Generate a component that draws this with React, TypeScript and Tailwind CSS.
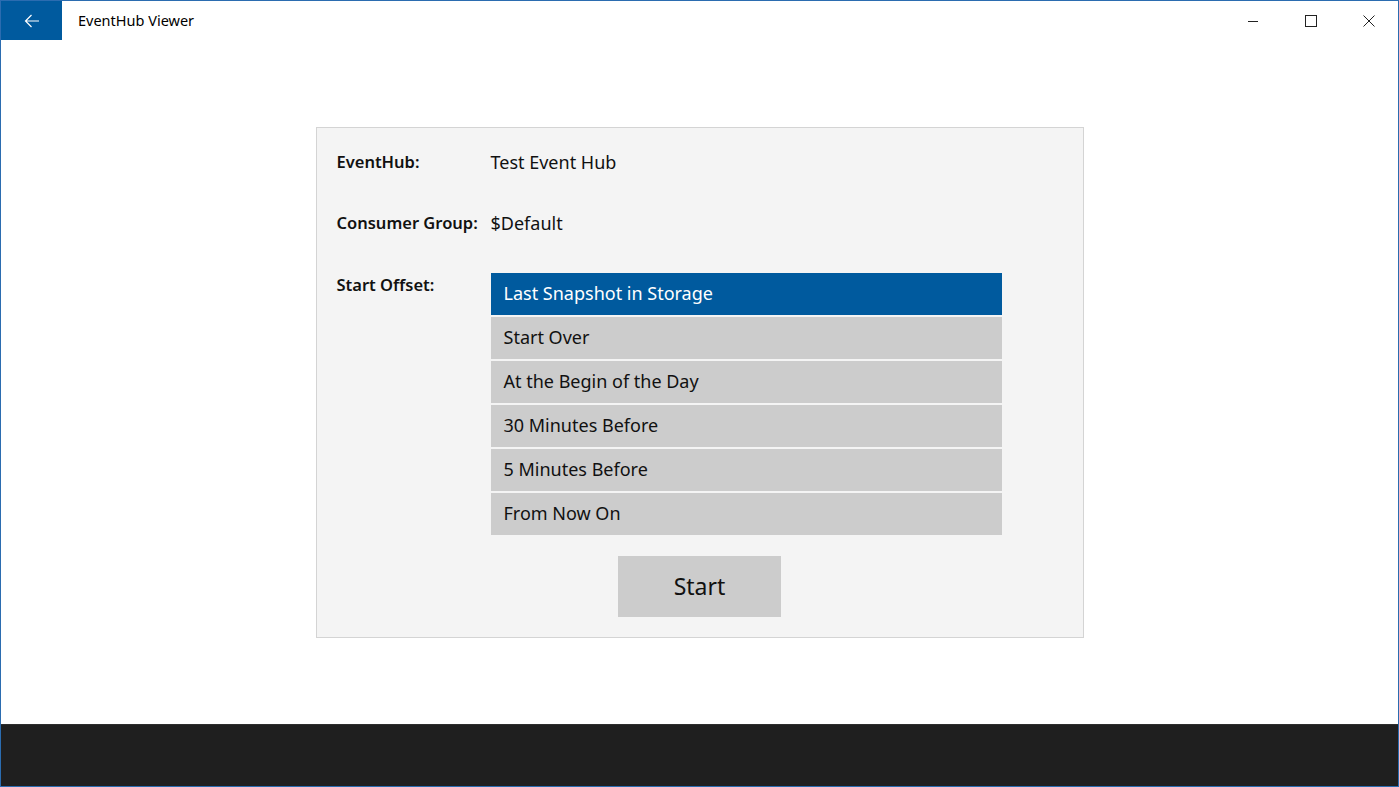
const options = [
  "Last Snapshot in Storage",
  "Start Over",
  "At the Begin of the Day",
  "30 Minutes Before",
  "5 Minutes Before",
  "From Now On",
];

export default function App() {
  const font = { fontFamily: '"Segoe UI", "Noto Sans", "Open Sans", sans-serif' };
  return (
    <div
      className="w-[1399px] h-[787px] flex flex-col bg-white border border-[#2b6cb0] text-[#111]"
      style={font}
    >
      {/* title bar */}
      <div className="h-[39px] flex items-center shrink-0">
        <div className="w-[61px] h-full bg-[#005a9e] flex items-center justify-center">
          <svg width="16" height="14" viewBox="0 0 16 14" fill="none" stroke="white" strokeWidth="1.2">
            <path d="M15 7H1.5M7.5 1L1.5 7l6 6" />
          </svg>
        </div>
        <div className="ml-[16px] text-[14.5px] text-black">EventHub Viewer</div>
        <div className="ml-auto flex h-full">
          <div className="w-[58px] h-full flex items-center justify-center">
            <svg width="12" height="12" viewBox="0 0 12 12" stroke="#222" strokeWidth="1">
              <path d="M1 6.5h10" />
            </svg>
          </div>
          <div className="w-[58px] h-full flex items-center justify-center">
            <svg width="12" height="12" viewBox="0 0 12 12" fill="none" stroke="#222" strokeWidth="1">
              <rect x="0.5" y="0.5" width="11" height="11" />
            </svg>
          </div>
          <div className="w-[58px] h-full flex items-center justify-center">
            <svg width="12" height="12" viewBox="0 0 12 12" stroke="#222" strokeWidth="1">
              <path d="M0.5 0.5l11 11M11.5 0.5l-11 11" />
            </svg>
          </div>
        </div>
      </div>

      {/* content */}
      <div className="flex-1 flex items-center justify-center">
        <div className="w-[768px] bg-[#f4f4f4] border border-[#d4d4d4] pl-[20px] pt-[22px] pb-[20px] text-[18px]">
          <div className="flex leading-[24px]">
            <div className="w-[154px] font-semibold text-[16.5px] whitespace-nowrap">EventHub:</div>
            <div>Test Event Hub</div>
          </div>
          <div className="flex leading-[24px] mt-[37px]">
            <div className="w-[154px] font-semibold text-[16.5px] whitespace-nowrap">Consumer Group:</div>
            <div>$Default</div>
          </div>
          <div className="flex mt-[38px]">
            <div className="w-[154px] font-semibold text-[16.5px] leading-[24px] whitespace-nowrap">
              Start Offset:
            </div>
            <div className="w-[511px] flex flex-col gap-[2px]">
              {options.map((o, i) => (
                <div
                  key={o}
                  className={`h-[42px] flex items-center pl-[13px] text-[18px] ${
                    i === 0 ? "bg-[#005a9e] text-white" : "bg-[#cccccc] text-[#111]"
                  }`}
                >
                  {o}
                </div>
              ))}
            </div>
          </div>
          <div className="flex justify-center mt-[21px] pr-[20px]">
            <div className="w-[163px] h-[61px] bg-[#cccccc] flex items-center justify-center text-[23px]">
              Start
            </div>
          </div>
        </div>
      </div>

      {/* bottom bar */}
      <div className="h-[62px] bg-[#1f1f1f] border-t border-[#2e2e2e] shrink-0" />
    </div>
  );
}
